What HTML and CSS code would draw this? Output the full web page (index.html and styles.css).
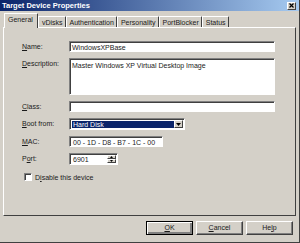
FILE: index.html
```html
<!DOCTYPE html>
<html lang="en">
<head>
    <meta charset="UTF-8">
    <title>Target Device Properties</title>
    <link rel="stylesheet" href="styles.css">
</head>
<body>
    <div class="window">
        <!-- Title bar -->
        <div class="titlebar">
            <span class="title">Target Device Properties</span>
            <span class="close">
                <svg width="5" height="5" viewBox="0 0 5 5"><path d="M0.5 0.5L4.5 4.5M4.5 0.5L0.5 4.5" stroke="#000" stroke-width="1.2"/></svg>
            </span>
        </div>

        <!-- Tabs -->
        <div class="tabs">
            <div class="tab active">General</div>
            <div class="tab">vDisks</div>
            <div class="tab">Authentication</div>
            <div class="tab">Personality</div>
            <div class="tab">PortBlocker</div>
            <div class="tab">Status</div>
        </div>

        <!-- General page -->
        <div class="panel">
            <div class="form">
                <div class="label"><u>N</u>ame:</div>
                <div class="field">WindowsXPBase</div>

                <div class="label"><u>D</u>escription:</div>
                <div class="field area">Master Windows XP Virtual Desktop Image</div>

                <div class="label"><u>C</u>lass:</div>
                <div class="field"></div>

                <div class="label"><u>B</u>oot from:</div>
                <div class="field select">
                    <span class="selected">Hard Disk</span>
                    <span class="drop">
                        <svg width="5" height="3" viewBox="0 0 5 3"><path d="M0 0H5L2.5 3Z" fill="#000"/></svg>
                    </span>
                </div>

                <div class="label"><u>M</u>AC:</div>
                <div class="field mac">00 - 1D - D8 - B7 - 1C - 00</div>

                <div class="label">P<u>o</u>rt:</div>
                <div class="field port">
                    <span class="port-value">6901</span>
                    <span class="spin">
                        <span class="spin-btn"><svg width="3" height="2" viewBox="0 0 3 2"><path d="M0 2H3L1.5 0Z" fill="#000"/></svg></span>
                        <span class="spin-btn"><svg width="3" height="2" viewBox="0 0 3 2"><path d="M0 0H3L1.5 2Z" fill="#000"/></svg></span>
                    </span>
                </div>
            </div>

            <div class="check">
                <span class="box"></span>
                <span>D<u>i</u>sable this device</span>
            </div>
        </div>

        <!-- Dialog buttons -->
        <div class="buttons">
            <div class="btn default"><u>O</u>K</div>
            <div class="btn"><u>C</u>ancel</div>
            <div class="btn">He<u>l</u>p</div>
        </div>
    </div>
</body>
</html>
```

FILE: styles.css
```css
body {
    margin: 0;
    padding: 0;
    font-family: "Liberation Sans", Arial, sans-serif;
    font-size: 7px;
    color: #1a1a1a;
    background-color: #d4d0c8;
}

.window {
    width: 300px;
    height: 243px;
    box-sizing: border-box;
    background-color: #d4d0c8;
    border-right: 1px solid #404040;
    border-bottom: 1px solid #404040;
    overflow: hidden;
}

.titlebar {
    height: 11px;
    display: flex;
    align-items: center;
    justify-content: space-between;
    background: linear-gradient(to right, #0a246a, #a6caf0);
    padding-left: 2px;
}

.title {
    color: #fff;
    font-weight: bold;
    font-size: 7.5px;
}

.close {
    width: 9px;
    height: 8px;
    margin-right: 3px;
    box-sizing: border-box;
    background-color: #d4d0c8;
    border: 1px solid;
    border-color: #fff #404040 #404040 #fff;
    display: flex;
    align-items: center;
    justify-content: center;
}

.tabs {
    display: flex;
    align-items: flex-end;
    height: 14px;
    margin-top: 2px;
    padding-left: 4px;
}

.tab {
    height: 11px;
    line-height: 11px;
    padding: 0 2px 0 3px;
    box-sizing: border-box;
    border-top: 1px solid #fff;
    border-left: 1px solid #fff;
    border-right: 1px solid #404040;
    border-radius: 1px 1px 0 0;
    white-space: nowrap;
}

.tab.active {
    height: 15px;
    line-height: 12px;
    padding: 0 4px 0 3px;
    margin-bottom: -1px;
    background-color: #d4d0c8;
    position: relative;
    z-index: 1;
}

.panel {
    margin: 0 3px;
    height: 189px;
    box-sizing: border-box;
    border: 1px solid;
    border-color: #fff #404040 #404040 #fff;
    padding: 13px 0 0 18px;
}

.form {
    display: grid;
    grid-template-columns: 47px 206px;
    grid-template-rows: 11px 37px 11px 12px 11px 12px;
    row-gap: 6px;
}

.label {
    padding-top: 2px;
    line-height: 8px;
    white-space: nowrap;
}

.field {
    box-sizing: border-box;
    background-color: #fff;
    border: 1px solid;
    border-color: #808080 #fff #fff #808080;
    box-shadow: inset 1px 1px 0 #404040;
    padding: 2px 0 0 2px;
    line-height: 7px;
    white-space: nowrap;
}

.area {
    padding-top: 3px;
}

.select {
    width: 116px;
    display: flex;
    align-items: stretch;
    padding: 2px 1px 1px 2px;
}

.selected {
    flex: 1;
    background-color: #0a246a;
    color: #fff;
    line-height: 8px;
    padding-left: 1px;
}

.drop {
    width: 9px;
    margin-top: -1px;
    box-sizing: border-box;
    background-color: #d4d0c8;
    border: 1px solid;
    border-color: #fff #404040 #404040 #fff;
    display: flex;
    align-items: center;
    justify-content: center;
}

.mac {
    width: 94px;
    padding-left: 3px;
}

.port {
    width: 49px;
    display: flex;
    padding: 2px 1px 1px 3px;
}

.port-value {
    flex: 1;
}

.spin {
    width: 9px;
    margin-top: -1px;
    display: flex;
    flex-direction: column;
}

.spin-btn {
    flex: 1;
    box-sizing: border-box;
    background-color: #d4d0c8;
    border: 1px solid;
    border-color: #fff #404040 #404040 #fff;
    display: flex;
    align-items: center;
    justify-content: center;
}

.check {
    display: flex;
    align-items: center;
    gap: 3px;
    margin-top: 8px;
    padding-left: 2px;
}

.box {
    width: 8px;
    height: 8px;
    box-sizing: border-box;
    background-color: #fff;
    border: 1px solid;
    border-color: #808080 #fff #fff #808080;
    box-shadow: inset 1px 1px 0 #404040;
}

.buttons {
    display: flex;
    justify-content: flex-end;
    gap: 3px;
    margin-top: 5px;
    padding-right: 6px;
}

.btn {
    width: 47px;
    height: 14px;
    box-sizing: border-box;
    border: 1px solid;
    border-color: #fff #404040 #404040 #fff;
    box-shadow: inset -1px -1px 0 #808080;
    text-align: center;
    line-height: 12px;
}

.btn.default {
    border: 1px solid #000;
    box-shadow: inset 1px 1px 0 #fff, inset -2px -2px 0 #808080;
}
```
